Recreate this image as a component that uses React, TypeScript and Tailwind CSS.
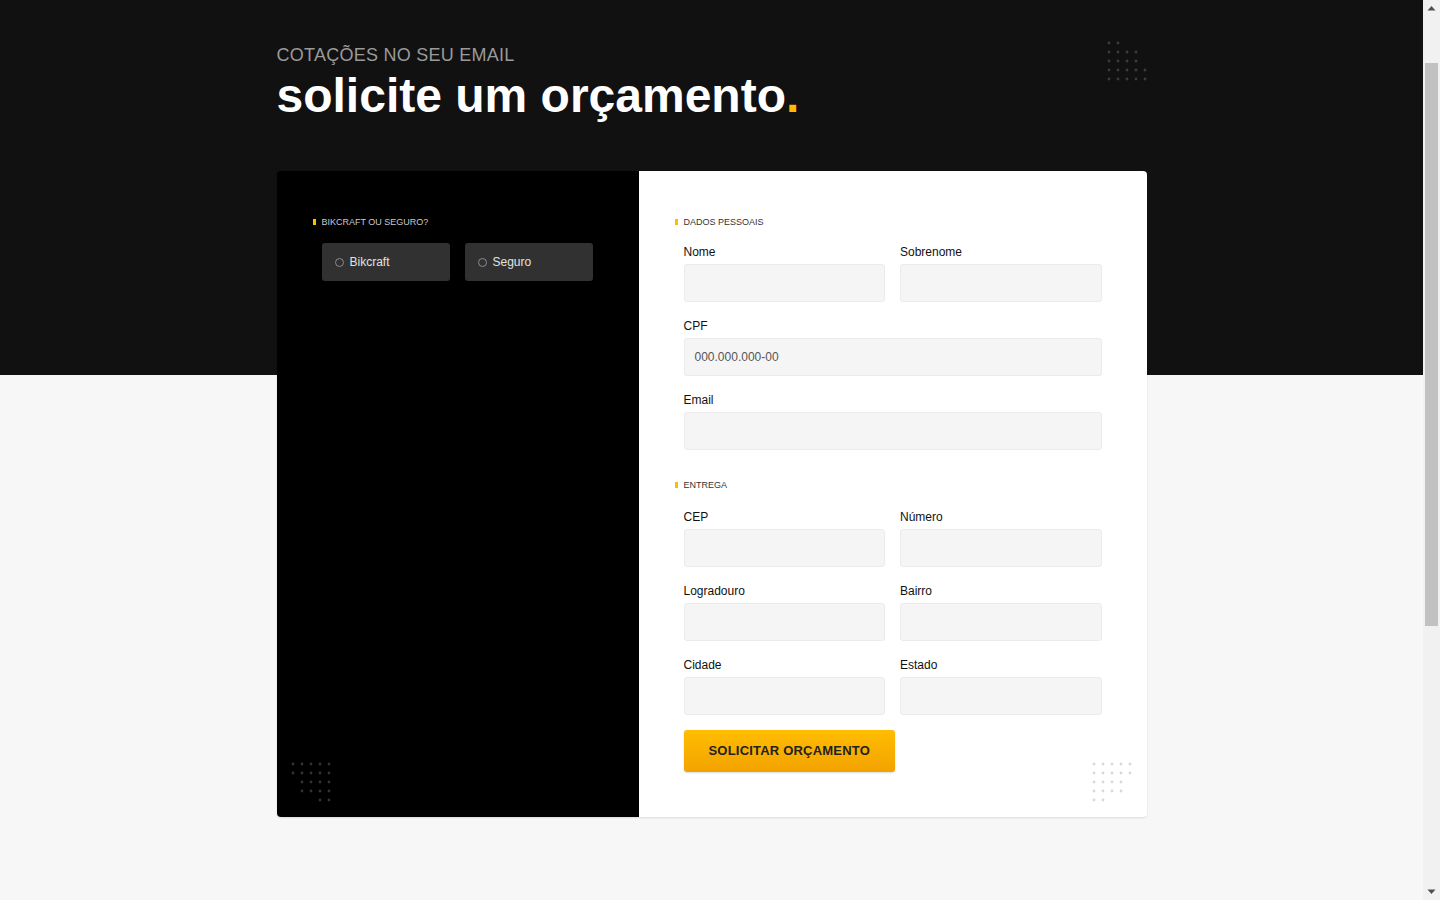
import React from 'react';

// dot patterns: each row lists which of the 5 columns has a dot
const headerDots = [[0, 1], [0, 1, 2, 3], [0, 1, 2, 3], [0, 1, 2, 3, 4], [0, 1, 2, 3, 4]];
const leftDots = [[0, 1, 2, 3, 4], [0, 1, 2, 3, 4], [1, 2, 3, 4], [1, 2, 3, 4], [3, 4]];
const rightDots = [[0, 1, 2, 3, 4], [0, 1, 2, 3, 4], [0, 1, 2, 3], [0, 1, 2, 3], [0, 1]];

const Dots: React.FC<{ rows: number[][]; color: string; className: string }> = ({ rows, color, className }) => (
  <svg width="40" height="40" viewBox="0 0 40 40" className={className}>
    {rows.map((cols, r) =>
      cols.map((c) => <circle key={`${r}-${c}`} cx={2 + c * 9} cy={2 + r * 9} r="1.4" fill={color} />)
    )}
  </svg>
);

const SectionLabel: React.FC<{ text: string; light?: boolean }> = ({ text, light }) => (
  <div className="-ml-[9px] flex items-center gap-[6px]">
    <span className="h-[6px] w-[3px] bg-[#fb0]"></span>
    <span className={`text-[9px] leading-[12px] uppercase ${light ? 'text-[#c8c8d0]' : 'text-[#333]'}`}>{text}</span>
  </div>
);

const Field: React.FC<{ label: string; placeholder?: string; full?: boolean }> = ({ label, placeholder, full }) => (
  <div className={full ? 'col-span-2' : ''}>
    <label className="mb-[4px] block text-[12px] leading-[16px] text-[#111]">{label}</label>
    <div className="flex h-[38px] items-center rounded-[3px] border border-[#ebebeb] bg-[#f5f5f5] pl-[10px] text-[12px] text-[#555]">
      {placeholder}
    </div>
  </div>
);

// page scrollbar as it shows in the capture
const Scrollbar: React.FC = () => (
  <div className="flex h-[900px] w-[17px] shrink-0 flex-col items-center bg-[#f1f1f1]">
    <svg width="9" height="17" viewBox="0 0 9 17" className="shrink-0">
      <path d="M0.5 10.5 L4.5 6 L8.5 10.5 Z" fill="#505050" />
    </svg>
    <div className="mt-[46px] h-[563px] w-[13px] bg-[#c1c1c1]"></div>
    <div className="flex-1"></div>
    <svg width="9" height="17" viewBox="0 0 9 17" className="shrink-0">
      <path d="M0.5 6.5 L4.5 11 L8.5 6.5 Z" fill="#505050" />
    </svg>
  </div>
);

const App: React.FC = () => {
  return (
    <div className="flex h-screen overflow-hidden bg-[#f7f7f7]">
      <div className="min-h-[1384px] w-[1423px] shrink-0 bg-[linear-gradient(#111111_0,#111111_375px,#f7f7f7_375px)] font-['Liberation_Sans',Arial,sans-serif]">
        <div className="relative mx-auto w-[870px] pt-[46px] pb-[60px]">
          <p className="text-[18px] leading-[18px] tracking-[0.25px] text-[#9a9a9a]">COTAÇÕES NO SEU EMAIL</p>
          <h1 className="mt-[8px] text-[48px] leading-[48px] font-bold text-white">
            solicite um orçamento<span className="text-[#fb0]">.</span>
          </h1>
          <Dots rows={headerDots} color="#3c3c3c" className="absolute right-0 top-[41px]" />

          {/* Card */}
          <div className="mt-[51px] flex overflow-hidden rounded-[4px] shadow-[0_1px_2px_rgba(0,0,0,0.12)]">
            <div className="relative w-[362px] bg-black px-[45px] pt-[45px]">
              <SectionLabel text="Bikcraft ou seguro?" light />
              <div className="mt-[15px] flex gap-[15px]">
                {['Bikcraft', 'Seguro'].map((opt) => (
                  <div key={opt} className="flex h-[38px] w-[128px] items-center rounded-[3px] bg-[#313131] pl-[13px]">
                    <span className="h-[9px] w-[9px] rounded-full border border-[#8a8a8a]"></span>
                    <span className="ml-[6px] text-[12px] text-[#e2e2e2]">{opt}</span>
                  </div>
                ))}
              </div>
              <Dots rows={leftDots} color="#333333" className="absolute left-[14px] bottom-[15px]" />
            </div>

            <div className="relative flex-1 bg-white px-[45px] pt-[45px] pb-[45px]">
              <SectionLabel text="Dados pessoais" />
              <div className="mt-[16px] grid grid-cols-2 gap-x-[15px] gap-y-[16px]">
                <Field label="Nome" />
                <Field label="Sobrenome" />
                <Field label="CPF" placeholder="000.000.000-00" full />
                <Field label="Email" full />
              </div>

              <div className="mt-[29px]">
                <SectionLabel text="Entrega" />
              </div>
              <div className="mt-[18px] grid grid-cols-2 gap-x-[15px] gap-y-[16px]">
                <Field label="CEP" />
                <Field label="Número" />
                <Field label="Logradouro" />
                <Field label="Bairro" />
                <Field label="Cidade" />
                <Field label="Estado" />
              </div>

              <button className="mt-[15px] h-[42px] rounded-[3px] bg-linear-to-b from-[#ffbd00] to-[#f3a200] px-[25px] text-[13px] font-bold tracking-[0.2px] text-[#222] shadow-[0_1px_2px_rgba(0,0,0,0.15)]">
                SOLICITAR ORÇAMENTO
              </button>
              <Dots rows={rightDots} color="#d8d8d8" className="absolute right-[15px] bottom-[15px]" />
            </div>
          </div>
        </div>
      </div>
      <Scrollbar />
    </div>
  );
};

export default App;
